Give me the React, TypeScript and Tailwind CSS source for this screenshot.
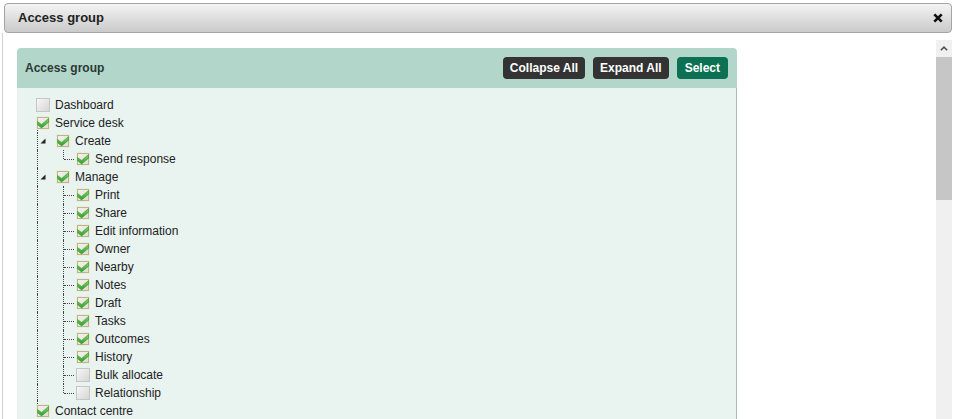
import { useId } from 'react';

/* ── Tree data (flattened, as it shows on screen) ── */

type Row = {
  label: string;
  level: 0 | 1 | 2;
  checked: boolean;
  open?: boolean;
  last?: boolean;
  tail?: boolean;
  head?: boolean;
};

const rows: Row[] = [
  { label: 'Dashboard', level: 0, checked: false },
  { label: 'Service desk', level: 0, checked: true, tail: true },
  { label: 'Create', level: 1, checked: true, open: true },
  { label: 'Send response', level: 2, checked: true, last: true },
  { label: 'Manage', level: 1, checked: true, open: true },
  { label: 'Print', level: 2, checked: true },
  { label: 'Share', level: 2, checked: true },
  { label: 'Edit information', level: 2, checked: true },
  { label: 'Owner', level: 2, checked: true },
  { label: 'Nearby', level: 2, checked: true },
  { label: 'Notes', level: 2, checked: true },
  { label: 'Draft', level: 2, checked: true },
  { label: 'Tasks', level: 2, checked: true },
  { label: 'Outcomes', level: 2, checked: true },
  { label: 'History', level: 2, checked: true },
  { label: 'Bulk allocate', level: 2, checked: false },
  { label: 'Relationship', level: 2, checked: false, last: true },
  { label: 'Contact centre', level: 0, checked: true, head: true },
];

/* ── Bits ── */

function Checkbox({ checked }: { checked: boolean }) {
  const id = useId();
  const gid = `${id}g`;
  return (
    <svg width="14" height="14" viewBox="0 0 14 14" className="block shrink-0">
      <defs>
        <linearGradient id={id} x1="0" y1="0" x2="1" y2="1">
          <stop offset="0" stopColor={checked ? '#f4f4ec' : '#f8f8f8'} />
          <stop offset="1" stopColor={checked ? '#dcdcd0' : '#d4d4d4'} />
        </linearGradient>
        <linearGradient id={gid} x1="0" y1="0" x2="0" y2="1">
          <stop offset="0" stopColor="#7ad86a" />
          <stop offset="1" stopColor="#2f9e27" />
        </linearGradient>
      </defs>
      {checked ? (
        <>
          <rect x="0" y="0" width="14" height="14" fill="#f1edc6" />
          <rect x="1.5" y="1.5" width="11" height="11" fill={`url(#${id})`} stroke="#b4b4a4" />
          <polygon
            points="1.6,5.6 5.6,8.4 12.6,2.6 12.6,6.2 5.6,12 1.6,8.8"
            fill={`url(#${gid})`}
            stroke="#2d8a25"
            strokeWidth="0.5"
            strokeLinejoin="round"
          />
        </>
      ) : (
        <rect x="0.5" y="0.5" width="13" height="13" fill={`url(#${id})`} stroke="#c6c6c6" />
      )}
    </svg>
  );
}

function Expander() {
  return (
    <svg width="6" height="6" viewBox="0 0 6 6" className="absolute left-[4px] top-[6px]">
      <polygon points="5.5,0.5 5.5,5.5 0.5,5.5" fill="#222" />
    </svg>
  );
}

function TreeRow({ row }: { row: Row }) {
  return (
    <div className="flex h-[18px] items-center">
      {row.level >= 1 && (
        <span className="relative h-full w-[20px] shrink-0">
          <span className="absolute left-[1px] top-0 h-full border-l border-dotted border-[#444]" />
          {row.open && <Expander />}
        </span>
      )}
      {row.level === 2 && (
        <span className="relative h-full w-[20px] shrink-0">
          <span
            className={
              row.last
                ? 'absolute left-[7px] top-0 h-[9px] border-l border-dotted border-[#444]'
                : 'absolute left-[7px] top-0 h-full border-l border-dotted border-[#444]'
            }
          />
          <span className="absolute left-[8px] top-[9px] w-[10px] border-t border-dotted border-[#444]" />
        </span>
      )}
      <span className="relative">
        {row.tail && (
          <span className="absolute left-[1px] top-[14px] h-[3px] border-l border-dotted border-[#444]" />
        )}
        {row.head && (
          <span className="absolute left-[1px] top-[-4px] h-[4px] border-l border-dotted border-[#444]" />
        )}
        <Checkbox checked={row.checked} />
      </span>
      <span className="ml-[5px] whitespace-nowrap text-[12px] leading-[18px] text-[#222]">
        {row.label}
      </span>
    </div>
  );
}

/* ══════════════════════════════════════════
   Page
══════════════════════════════════════════ */

export default function App() {
  return (
    <div className="relative h-[419px] w-[953px] overflow-hidden bg-white font-['Liberation_Sans',Arial,sans-serif]">
      {/* ── Dialog title bar ── */}
      <div className="pl-[4px] pr-[1px] pt-[3px]">
        <div className="flex h-[30px] items-center justify-between rounded-[4px] border border-[#a4a4a4] bg-gradient-to-b from-[#f4f4f4] to-[#cacaca] pl-[13px] pr-[8px]">
          <span className="text-[13px] font-bold text-[#222]">Access group</span>
          <svg width="10" height="10" viewBox="0 0 10 10" className="block">
            <path d="M1.3 1.3 L8.7 8.7 M8.7 1.3 L1.3 8.7" stroke="#111" strokeWidth="2.6" />
          </svg>
        </div>
      </div>

      {/* ── Dialog body ── */}
      <div className="ml-[2px] flex h-[386px] border-l border-[#d2d2d2]">
        <div className="flex-1 overflow-hidden pl-[14px] pt-[15px]">
          <section className="w-[720px]">
            <header className="flex h-[40px] items-center justify-between rounded-t-[4px] bg-[#b3d6cb] pl-[8px] pr-[9px]">
              <span className="text-[12px] font-bold text-[#2b3a35]">Access group</span>
              <div className="flex gap-[8px]">
                <button className="h-[22px] rounded-[4px] bg-[#333333] px-[7px] text-[12px] font-bold text-white">
                  Collapse All
                </button>
                <button className="h-[22px] rounded-[4px] bg-[#333333] px-[7px] text-[12px] font-bold text-white">
                  Expand All
                </button>
                <button className="h-[22px] rounded-[4px] bg-[#0b7152] px-[8px] text-[12px] font-bold text-white">
                  Select
                </button>
              </div>
            </header>
            <div className="h-[360px] border-r border-[#b0b8b5] bg-[#e9f3f0] pl-[19px] pt-[8px]">
              {rows.map((r) => (
                <TreeRow key={r.label} row={r} />
              ))}
            </div>
          </section>
        </div>

        {/* ── Scrollbar ── */}
        <div className="mr-[1px] mt-[7px] flex w-[16px] flex-col bg-[#f0f0f0]">
          <div className="flex h-[17px] items-center justify-center">
            <svg width="8" height="5" viewBox="0 0 8 5" className="block">
              <path d="M0.8 4.3 L4 1.2 L7.2 4.3" fill="none" stroke="#505050" strokeWidth="1.6" />
            </svg>
          </div>
          <div className="h-[143px] bg-[#c6c6c6]" />
        </div>
      </div>
    </div>
  );
}
